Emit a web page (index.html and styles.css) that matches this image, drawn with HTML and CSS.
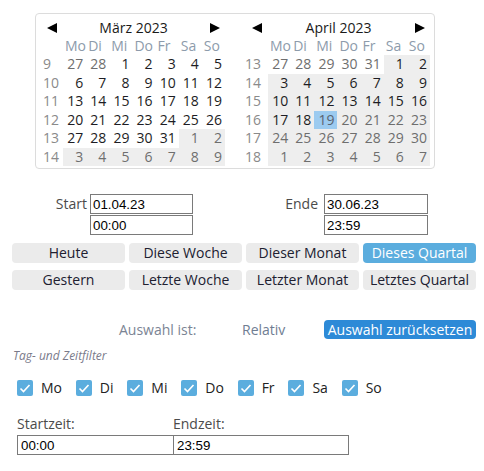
FILE: index.html
```html
<!DOCTYPE html>
<html lang="de">
<head>
<meta charset="utf-8">
<title>Zeitraum</title>
<link rel="stylesheet" href="styles.css">
</head>
<body>
<div class="cal">
  <div class="month">
    <div class="month-head">
      <svg class="arrow" width="10" height="10" viewBox="0 0 10 10"><polygon points="0,5 10,0 10,10" fill="#000"/></svg>
      <span class="title">März 2023</span>
      <svg class="arrow" width="10" height="10" viewBox="0 0 10 10"><polygon points="10,5 0,0 0,10" fill="#000"/></svg>
    </div>
    <div class="grid wk-wide">
      <span></span><span class="dow">Mo</span><span class="dow">Di</span><span class="dow">Mi</span><span class="dow">Do</span><span class="dow">Fr</span><span class="dow">Sa</span><span class="dow">So</span>
      <span class="wk">9</span><span class="d other">27</span><span class="d other">28</span><span class="d">1</span><span class="d">2</span><span class="d">3</span><span class="d">4</span><span class="d">5</span>
      <span class="wk">10</span><span class="d">6</span><span class="d">7</span><span class="d">8</span><span class="d">9</span><span class="d">10</span><span class="d">11</span><span class="d">12</span>
      <span class="wk">11</span><span class="d">13</span><span class="d">14</span><span class="d">15</span><span class="d">16</span><span class="d">17</span><span class="d">18</span><span class="d">19</span>
      <span class="wk">12</span><span class="d">20</span><span class="d">21</span><span class="d">22</span><span class="d">23</span><span class="d">24</span><span class="d">25</span><span class="d">26</span>
      <span class="wk">13</span><span class="d">27</span><span class="d">28</span><span class="d">29</span><span class="d">30</span><span class="d">31</span><span class="d other sel">1</span><span class="d other sel">2</span>
      <span class="wk">14</span><span class="d other sel">3</span><span class="d other sel">4</span><span class="d other sel">5</span><span class="d other sel">6</span><span class="d other sel">7</span><span class="d other sel">8</span><span class="d other sel">9</span>
    </div>
  </div>
  <div class="month">
    <div class="month-head">
      <svg class="arrow" width="10" height="10" viewBox="0 0 10 10"><polygon points="0,5 10,0 10,10" fill="#000"/></svg>
      <span class="title">April 2023</span>
      <svg class="arrow" width="10" height="10" viewBox="0 0 10 10"><polygon points="10,5 0,0 0,10" fill="#000"/></svg>
    </div>
    <div class="grid">
      <span></span><span class="dow">Mo</span><span class="dow">Di</span><span class="dow">Mi</span><span class="dow">Do</span><span class="dow">Fr</span><span class="dow">Sa</span><span class="dow">So</span>
      <span class="wk">13</span><span class="d other">27</span><span class="d other">28</span><span class="d other">29</span><span class="d other">30</span><span class="d other">31</span><span class="d sel">1</span><span class="d sel">2</span>
      <span class="wk">14</span><span class="d sel">3</span><span class="d sel">4</span><span class="d sel">5</span><span class="d sel">6</span><span class="d sel">7</span><span class="d sel">8</span><span class="d sel">9</span>
      <span class="wk">15</span><span class="d sel">10</span><span class="d sel">11</span><span class="d sel">12</span><span class="d sel">13</span><span class="d sel">14</span><span class="d sel">15</span><span class="d sel">16</span>
      <span class="wk">16</span><span class="d sel">17</span><span class="d sel">18</span><span class="d today">19</span><span class="d sel off">20</span><span class="d sel off">21</span><span class="d sel off">22</span><span class="d sel off">23</span>
      <span class="wk">17</span><span class="d sel off">24</span><span class="d sel off">25</span><span class="d sel off">26</span><span class="d sel off">27</span><span class="d sel off">28</span><span class="d sel off">29</span><span class="d sel off">30</span>
      <span class="wk">18</span><span class="d sel off">1</span><span class="d sel off">2</span><span class="d sel off">3</span><span class="d sel off">4</span><span class="d sel off">5</span><span class="d sel off">6</span><span class="d sel off">7</span>
    </div>
  </div>
</div>

<div class="range">
  <label class="rlabel">Start</label>
  <div class="stack">
    <input class="field" type="text" value="01.04.23">
    <input class="field" type="text" value="00:00">
  </div>
  <label class="rlabel rlabel-end">Ende</label>
  <div class="stack">
    <input class="field" type="text" value="30.06.23">
    <input class="field" type="text" value="23:59">
  </div>
</div>

<div class="presets">
  <button class="preset">Heute</button>
  <button class="preset">Diese Woche</button>
  <button class="preset">Dieser Monat</button>
  <button class="preset active">Dieses Quartal</button>
  <button class="preset">Gestern</button>
  <button class="preset">Letzte Woche</button>
  <button class="preset">Letzter Monat</button>
  <button class="preset">Letztes Quartal</button>
</div>

<div class="status">
  <span></span>
  <span class="muted">Auswahl ist:</span>
  <span class="muted rel">Relativ</span>
  <button class="reset">Auswahl zurücksetzen</button>
</div>

<div class="filter-title">Tag- und Zeitfilter</div>

<div class="days">
  <label class="day"><span class="box"><svg width="16" height="16" viewBox="0 0 16 16"><polyline points="3.5,8.5 6.5,11.5 12.5,5" fill="none" stroke="#fff" stroke-width="1.6"/></svg></span>Mo</label>
  <label class="day"><span class="box"><svg width="16" height="16" viewBox="0 0 16 16"><polyline points="3.5,8.5 6.5,11.5 12.5,5" fill="none" stroke="#fff" stroke-width="1.6"/></svg></span>Di</label>
  <label class="day"><span class="box"><svg width="16" height="16" viewBox="0 0 16 16"><polyline points="3.5,8.5 6.5,11.5 12.5,5" fill="none" stroke="#fff" stroke-width="1.6"/></svg></span>Mi</label>
  <label class="day"><span class="box"><svg width="16" height="16" viewBox="0 0 16 16"><polyline points="3.5,8.5 6.5,11.5 12.5,5" fill="none" stroke="#fff" stroke-width="1.6"/></svg></span>Do</label>
  <label class="day"><span class="box"><svg width="16" height="16" viewBox="0 0 16 16"><polyline points="3.5,8.5 6.5,11.5 12.5,5" fill="none" stroke="#fff" stroke-width="1.6"/></svg></span>Fr</label>
  <label class="day"><span class="box"><svg width="16" height="16" viewBox="0 0 16 16"><polyline points="3.5,8.5 6.5,11.5 12.5,5" fill="none" stroke="#fff" stroke-width="1.6"/></svg></span>Sa</label>
  <label class="day"><span class="box"><svg width="16" height="16" viewBox="0 0 16 16"><polyline points="3.5,8.5 6.5,11.5 12.5,5" fill="none" stroke="#fff" stroke-width="1.6"/></svg></span>So</label>
</div>

<div class="times">
  <label class="tlabel">Startzeit:</label>
  <label class="tlabel">Endzeit:</label>
  <input class="tfield tfield-first" type="text" value="00:00">
  <input class="tfield" type="text" value="23:59">
</div>
</body>
</html>
```

FILE: styles.css
```css
* { box-sizing: border-box; }

body {
  margin: 0;
  font-family: "Open Sans", "Noto Sans", sans-serif;
  font-size: 14px;
  color: #222;
  background: #fff;
}

/* Calendar */
.cal {
  display: flex;
  gap: 18px;
  width: 400px;
  height: 156px;
  margin: 13px 0 0 35px;
  padding: 5px 3px 2px 2px;
  border: 1px solid #dcdcdc;
  border-radius: 4px;
}

.month { width: 187px; }

.month-head {
  display: flex;
  align-items: center;
  height: 18px;
  padding: 0 5px 0 9px;
}

.arrow { flex: none; }

.title {
  flex: 1;
  text-align: center;
  line-height: 18px;
  color: #1a1a1a;
}

.grid {
  display: grid;
  grid-template-columns: 25px repeat(7, 1fr);
}

.dow {
  height: 18px;
  line-height: 18px;
  padding-left: 2px;
  color: #8d9bab;
}

.wk {
  height: 18.5px;
  line-height: 18.5px;
  padding-left: 2px;
  color: #8a8a8a;
}

.wk-wide .wk { padding-left: 5px; }

.d {
  height: 18.5px;
  line-height: 18.5px;
  text-align: right;
  padding-right: 3px;
  color: #1d1d24;
}

.d.other, .d.off { color: #6e6e6e; }
.d.sel { background: #eeeeee; }
.d.today { background: #9ccbf0; color: #5a6470; }

/* Start / Ende */
.range {
  display: grid;
  grid-template-columns: 78px 103px 131px 104px;
  margin: 25px 0 0 12px;
}

.rlabel {
  text-align: right;
  padding-right: 3px;
  line-height: 20px;
  color: #4b4b4b;
}

.rlabel-end { padding-right: 6px; }

.stack {
  display: flex;
  flex-direction: column;
  gap: 1px;
}

.field, .tfield {
  display: block;
  width: 100%;
  height: 20px;
  margin: 0;
  padding: 0 2px;
  border: 1px solid #7a7a7a;
  border-radius: 0;
  font-family: "Liberation Sans", Arial, sans-serif;
  font-size: 13.333px;
  color: #000;
  background: #fff;
  outline: none;
}

/* Presets */
.presets {
  display: grid;
  grid-template-columns: repeat(4, 113px);
  column-gap: 4px;
  row-gap: 7px;
  margin: 8px 0 0 12px;
}

.preset {
  height: 20px;
  margin: 0;
  padding: 0;
  border: none;
  border-radius: 4px;
  background: #ebebeb;
  font-family: "Open Sans", "Noto Sans", sans-serif;
  font-size: 14px;
  line-height: 20px;
  color: #202030;
}

.preset.active {
  background: #5badde;
  color: #fff;
}

/* Status */
.status {
  display: grid;
  grid-template-columns: 107px 123px 82px 152px;
  align-items: center;
  margin: 30px 0 0 12px;
}

.muted { color: #7b8494; }
.rel { color: #6f7d92; }

.reset {
  height: 19px;
  margin: 0;
  padding: 0;
  border: none;
  border-radius: 4px;
  background: #2d8ad7;
  color: #fff;
  font-family: "Open Sans", "Noto Sans", sans-serif;
  font-size: 14px;
  line-height: 19px;
}

.filter-title {
  margin: 9px 0 0 13px;
  font-size: 12px;
  line-height: 16px;
  font-style: italic;
  color: #7a7a8a;
}

/* Weekdays */
.days {
  display: flex;
  align-items: center;
  gap: 13.8px;
  margin: 16px 0 0 17px;
  height: 16px;
}

.day {
  display: flex;
  align-items: center;
  gap: 8px;
  line-height: 16px;
  color: #222;
}

.box {
  display: block;
  width: 16px;
  height: 16px;
  border-radius: 2px;
  background: #5badde;
}

.box svg { display: block; }

/* Times */
.times {
  display: grid;
  grid-template-columns: 156px 176px;
  margin: 18px 0 0 17px;
}

.tlabel {
  line-height: 20px;
  color: #4b4b4b;
  margin-bottom: 1px;
}

.tfield { padding: 0 3px; }
.tfield-first { width: 157px; position: relative; z-index: 1; }
```
